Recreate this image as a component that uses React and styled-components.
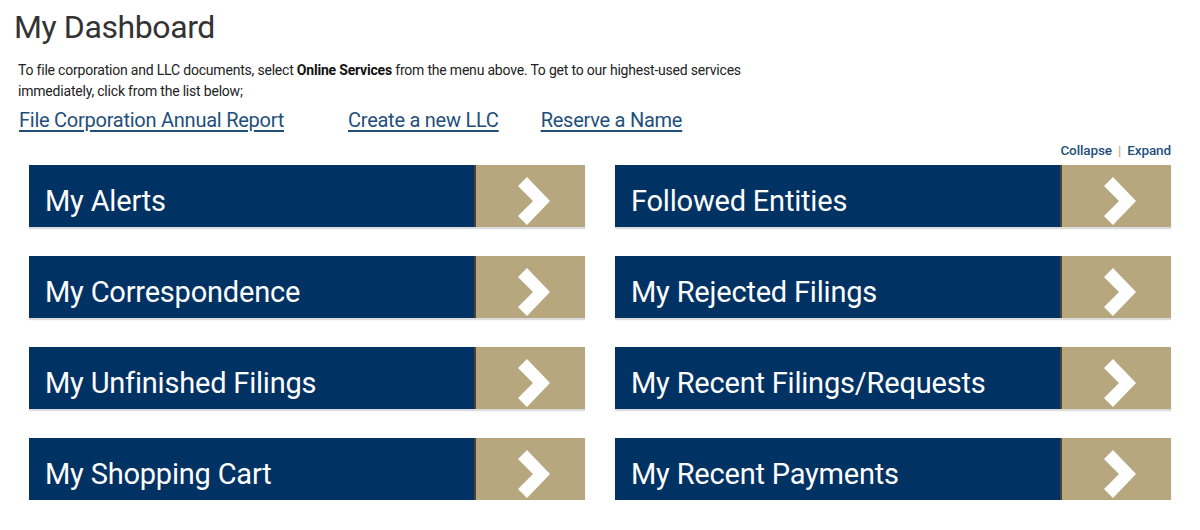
import React from 'react'
import styled, { createGlobalStyle } from 'styled-components'

const GlobalStyle = createGlobalStyle`
    html, body {
        margin:0;
        padding:0;
        background:#fff;
        font-family: Roboto, 'Liberation Sans', sans-serif;
    }
`;

const Page = styled.div`
    padding:8px 29px 0 14px;
    width:1200px;
    box-sizing:border-box;
`;

const Heading = styled.h1`
    margin:0;
    color:#333;
    font-weight:400;
    font-size:32px;
    line-height:38px;
    letter-spacing:-0.4px;
`;

const Intro = styled.p`
    margin:14px 0 0 4px;
    width:750px;
    color:#222;
    font-size:14px;
    line-height:21px;
    letter-spacing:-0.2px;

    b {
        font-weight:700;
        color:#111;
    }
`;

const QuickLinks = styled.div`
    display:flex;
    margin:5px 0 0 5px;
`;

const QuickLink = styled.a`
    color:#1f4f7c;
    font-size:20px;
    line-height:26px;
    letter-spacing:-0.25px;
    text-decoration:underline;
    text-underline-offset:3px;
    margin-right:${p => p.$gap}px;
    cursor:pointer;
`;

const Toggles = styled.div`
    display:flex;
    justify-content:flex-end;
    align-items:center;
    gap:6px;
    margin:9px 0 5px;
    font-size:13.5px;
    line-height:16px;
    color:#1f4f7c;
    font-weight:500;
    letter-spacing:-0.1px;
`;

const Sep = styled.span`
    color:#b6a77f;
    font-weight:400;
`;

const Grid = styled.div`
    display:grid;
    grid-template-columns:1fr 1fr;
    column-gap:30px;
    row-gap:29px;
    margin:0 0 0 15px;
    padding-top:2px;
`;

const Panel = styled.div`
    display:flex;
    height:62px;
    box-shadow:0 2px 1px #dcdcdc;
    cursor:pointer;
`;

const Title = styled.div`
    flex:1;
    display:flex;
    align-items:center;
    padding:9px 0 0 16px;
    background:#003263;
    color:#fff;
    font-size:29px;
    letter-spacing:-0.2px;
`;

const ArrowBox = styled.div`
    width:111px;
    display:flex;
    align-items:center;
    justify-content:center;
    padding:9px 0 0 6px;
    box-sizing:border-box;
    background:#b6a77f;
    border-left:2px solid #4b4330;
`;

const Chevron = () => (
    <svg width="32" height="48" viewBox="0 0 32 48">
        <polygon points="0,9 9,0 32,24 9,48 0,39 15,24" fill="#fff" />
    </svg>
);

const panels = [
    'My Alerts',
    'Followed Entities',
    'My Correspondence',
    'My Rejected Filings',
    'My Unfinished Filings',
    'My Recent Filings/Requests',
    'My Shopping Cart',
    'My Recent Payments',
];

export default function App() {
    return (
        <>
            <GlobalStyle />
            <Page>
                <Heading>My Dashboard</Heading>
                <Intro>
                    To file corporation and LLC documents, select <b>Online Services</b> from the menu above. To get to our highest-used services immediately, click from the list below;
                </Intro>
                <QuickLinks>
                    <QuickLink $gap={64}>File Corporation Annual Report</QuickLink>
                    <QuickLink $gap={42}>Create a new LLC</QuickLink>
                    <QuickLink $gap={0}>Reserve a Name</QuickLink>
                </QuickLinks>
                <Toggles>
                    <span>Collapse</span>
                    <Sep>|</Sep>
                    <span>Expand</span>
                </Toggles>
                <Grid>
                    {panels.map(name => (
                        <Panel key={name}>
                            <Title>{name}</Title>
                            <ArrowBox><Chevron /></ArrowBox>
                        </Panel>
                    ))}
                </Grid>
            </Page>
        </>
    )
}
